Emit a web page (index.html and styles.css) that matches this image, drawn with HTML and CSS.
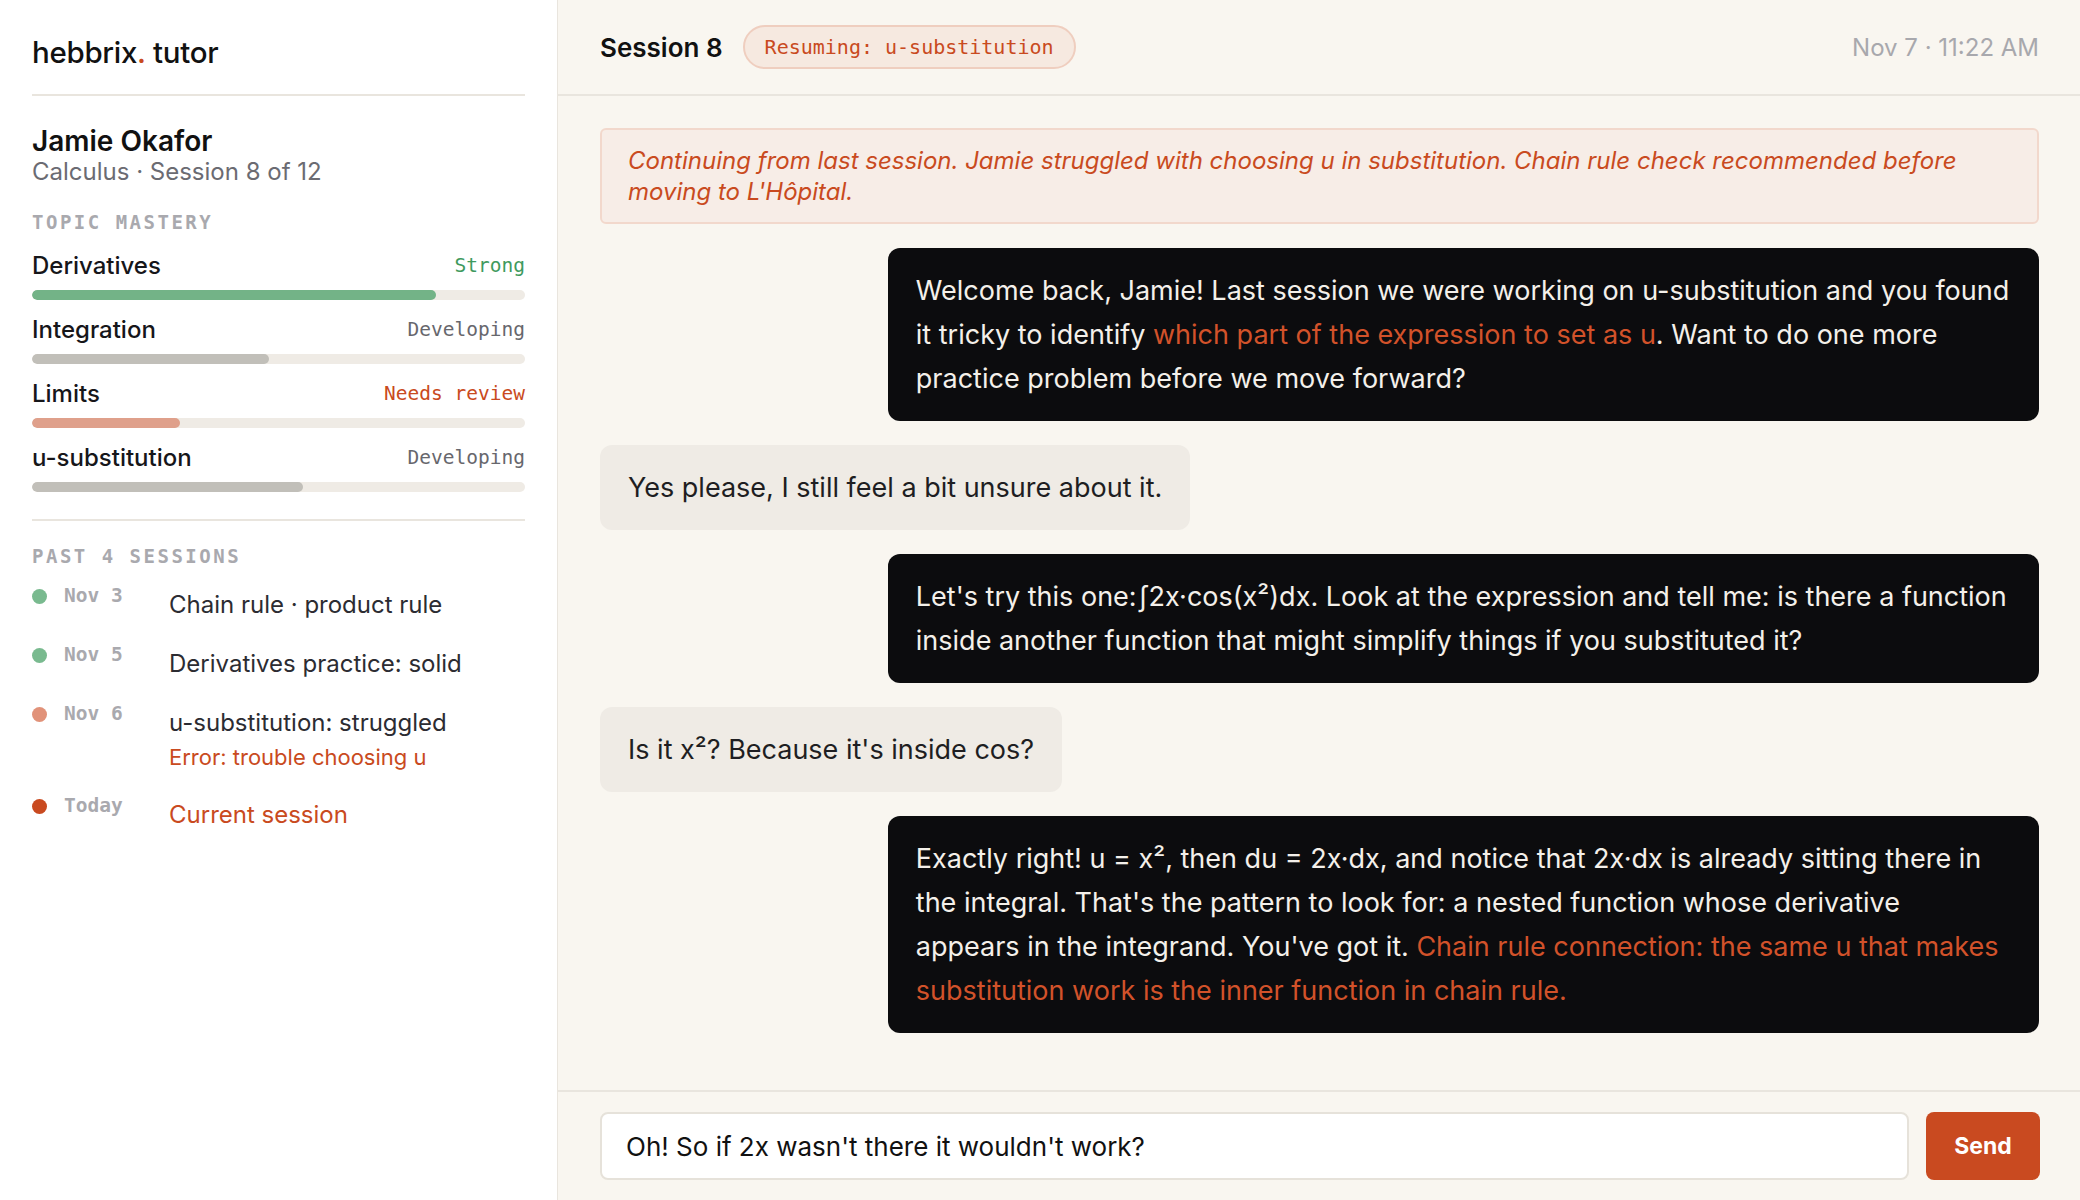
FILE: index.html
```html
<!DOCTYPE html>
<html>
<head>
  <title>hebbrix. tutor</title>
  <link rel="stylesheet" href="styles.css">
</head>
<body>
  <div id="sidebar">
    <div class="brand">hebbrix<span class="dot-accent">.</span> tutor</div>

    <div class="student">
      <div class="student-name">Jamie Okafor</div>
      <div class="student-meta">Calculus · Session 8 of 12</div>
    </div>

    <div class="label">TOPIC MASTERY</div>
    <div class="topics">
      <div class="topic">
        <div class="topic-head">
          <span class="topic-name">Derivatives</span>
          <span class="topic-status strong">Strong</span>
        </div>
        <div class="track"><div class="fill fill-strong" style="width: 82%;"></div></div>
      </div>
      <div class="topic">
        <div class="topic-head">
          <span class="topic-name">Integration</span>
          <span class="topic-status developing">Developing</span>
        </div>
        <div class="track"><div class="fill fill-developing" style="width: 48%;"></div></div>
      </div>
      <div class="topic">
        <div class="topic-head">
          <span class="topic-name">Limits</span>
          <span class="topic-status review">Needs review</span>
        </div>
        <div class="track"><div class="fill fill-review" style="width: 30%;"></div></div>
      </div>
      <div class="topic">
        <div class="topic-head">
          <span class="topic-name">u-substitution</span>
          <span class="topic-status developing">Developing</span>
        </div>
        <div class="track"><div class="fill fill-developing" style="width: 55%;"></div></div>
      </div>
    </div>

    <div class="divider"></div>

    <div class="label">PAST 4 SESSIONS</div>
    <div class="sessions">
      <div class="session">
        <span class="session-dot green"></span>
        <span class="session-date">Nov 3</span>
        <div class="session-info">
          <div class="session-desc">Chain rule · product rule</div>
        </div>
      </div>
      <div class="session">
        <span class="session-dot green"></span>
        <span class="session-date">Nov 5</span>
        <div class="session-info">
          <div class="session-desc">Derivatives practice: solid</div>
        </div>
      </div>
      <div class="session">
        <span class="session-dot salmon"></span>
        <span class="session-date">Nov 6</span>
        <div class="session-info">
          <div class="session-desc">u-substitution: struggled</div>
          <div class="session-error">Error: trouble choosing u</div>
        </div>
      </div>
      <div class="session">
        <span class="session-dot red"></span>
        <span class="session-date">Today</span>
        <div class="session-info">
          <div class="session-desc current">Current session</div>
        </div>
      </div>
    </div>
  </div>

  <div id="main">
    <div class="header">
      <span class="session-title">Session 8</span>
      <span class="pill">Resuming: u-substitution</span>
      <span class="timestamp">Nov 7 · 11:22 AM</span>
    </div>

    <div class="chat">
      <div class="note">Continuing from last session. Jamie struggled with choosing u in substitution. Chain rule check recommended before moving to L'Hôpital.</div>

      <div class="msg tutor">Welcome back, Jamie! Last session we were working on u-substitution and you found it tricky to identify <span class="hl">which part of the expression to set as u</span>. Want to do one more practice problem before we move forward?</div>

      <div class="msg student-msg">Yes please, I still feel a bit unsure about it.</div>

      <div class="msg tutor">Let's try this one:<span class="integral">∫</span>2x·cos(x²)dx. Look at the expression and tell me: is there a function inside another function that might simplify things if you substituted it?</div>

      <div class="msg student-msg">Is it x²? Because it's inside cos?</div>

      <div class="msg tutor">Exactly right! u = x², then du = 2x·dx, and notice that 2x·dx is already sitting there in the integral. That's the pattern to look for: a nested function whose derivative appears in the integrand. You've got it. <span class="hl">Chain rule connection: the same u that makes substitution work is the inner function in chain rule.</span></div>
    </div>

    <div class="composer">
      <input type="text" class="composer-input" value="Oh! So if 2x wasn't there it wouldn't work?">
      <button class="send-button">Send</button>
    </div>
  </div>
</body>
</html>
```

FILE: styles.css
```css
body {
  font-family: Inter, "Noto Sans", sans-serif;
  margin: 0;
  height: 100vh;
  display: flex;
  color: #16161a;
  background-color: #f9f6f0;
  overflow: hidden;
}

#sidebar {
  width: 558px;
  box-sizing: border-box;
  flex-shrink: 0;
  background-color: #fff;
  border-right: 1px solid #e9e5de;
  padding: 0 32px;
}

.brand {
  font-size: 29.5px;
  line-height: 34px;
  font-weight: 500;
  letter-spacing: -0.3px;
  color: #111;
  padding: 35px 0 25px;
  border-bottom: 2px solid #e9e5de;
}

.dot-accent {
  color: #c94a20;
}

.student {
  padding-top: 29px;
}

.student-name {
  font-size: 28px;
  line-height: 32px;
  font-weight: 600;
  color: #111;
}

.student-meta {
  font-size: 24px;
  line-height: 30px;
  color: #6b6b72;
}

.label {
  font-family: "DejaVu Sans Mono", monospace;
  font-size: 19px;
  line-height: 23px;
  font-weight: bold;
  letter-spacing: 2.5px;
  color: #a9a9ae;
  margin-top: 24px;
}

.topics {
  margin-top: 16px;
}

.topic {
  margin-bottom: 14px;
}

.topic-head {
  display: flex;
  justify-content: space-between;
  align-items: center;
  height: 30px;
}

.topic-name {
  font-size: 24px;
  font-weight: 500;
  color: #16161a;
}

.topic-status {
  font-family: "DejaVu Sans Mono", monospace;
  font-size: 19.5px;
}

.topic-status.strong {
  color: #3f9a5e;
}

.topic-status.developing {
  color: #67676d;
}

.topic-status.review {
  color: #c94a20;
}

.track {
  margin-top: 10px;
  height: 10px;
  border-radius: 5px;
  background-color: #efebe5;
  overflow: hidden;
}

.fill {
  height: 100%;
  border-radius: 5px;
}

.fill-strong {
  background-color: #73b387;
}

.fill-developing {
  background-color: #c1bfb9;
}

.fill-review {
  background-color: #dfa08b;
}

.divider {
  margin-top: 27px;
  height: 2px;
  background-color: #e9e5de;
}

.sessions {
  margin-top: 16px;
}

.session {
  display: flex;
  align-items: flex-start;
  margin-bottom: 23px;
}

.session-dot {
  width: 15px;
  height: 15px;
  border-radius: 50%;
  margin-top: 5px;
  margin-right: 17px;
  flex-shrink: 0;
}

.session-dot.green {
  background-color: #79ba8f;
}

.session-dot.salmon {
  background-color: #e19279;
}

.session-dot.red {
  background-color: #c94a20;
}

.session-date {
  font-family: "DejaVu Sans Mono", monospace;
  font-size: 19.5px;
  line-height: 23px;
  font-weight: bold;
  color: #a9a9ae;
  width: 105px;
  flex-shrink: 0;
}

.session-info {
  padding-top: 6px;
}

.session-desc {
  font-size: 24px;
  line-height: 30px;
  color: #2c2c32;
}

.session-desc.current {
  color: #c94a20;
}

.session-error {
  font-size: 22px;
  line-height: 28px;
  margin-top: 5px;
  color: #c94a20;
}

#main {
  flex: 1;
  display: flex;
  flex-direction: column;
  min-width: 0;
}

.header {
  height: 94px;
  display: flex;
  align-items: center;
  padding: 0 41px 0 42px;
  border-bottom: 2px solid #e9e5de;
  flex-shrink: 0;
}

.session-title {
  font-size: 26px;
  font-weight: 600;
  color: #111;
}

.pill {
  margin-left: 20px;
  height: 40px;
  line-height: 40px;
  padding: 0 20px;
  border: 2px solid #efcebf;
  border-radius: 22px;
  background-color: #f6e9e0;
  font-family: "DejaVu Sans Mono", monospace;
  font-size: 20px;
  color: #c94a20;
}

.timestamp {
  margin-left: auto;
  font-size: 24px;
  color: #a8a8ad;
}

.chat {
  flex: 1;
  display: flex;
  flex-direction: column;
  gap: 24px;
  padding: 32px 41px 0 42px;
  overflow: hidden;
}

.note {
  border: 2px solid #f2d8cc;
  border-radius: 6px;
  background-color: #f7ede7;
  padding: 15px 26px;
  font-size: 24px;
  line-height: 31px;
  font-style: italic;
  color: #c94a20;
}

.msg {
  font-size: 27px;
  line-height: 44px;
  padding: 21px 28px 20px;
  border-radius: 12px;
  max-width: 80%;
  box-sizing: border-box;
}

.msg.tutor {
  align-self: flex-end;
  background-color: #0c0c0e;
  color: #f4f0ea;
}

.msg.student-msg {
  align-self: flex-start;
  background-color: #efebe5;
  color: #1e1e22;
}

.integral {
  margin-left: 2px;
}

.hl {
  color: #d2522a;
}

.composer {
  flex-shrink: 0;
  display: flex;
  gap: 17px;
  padding: 20px 40px 20px 42px;
  border-top: 2px solid #e9e5de;
}

.composer-input {
  flex: 1;
  height: 68px;
  box-sizing: border-box;
  border: 2px solid #e6e2da;
  border-radius: 8px;
  background-color: #fff;
  padding: 0 24px;
  font-family: Inter, "Noto Sans", sans-serif;
  font-size: 26px;
  color: #111;
  outline: none;
}

.send-button {
  width: 114px;
  height: 68px;
  border: none;
  border-radius: 8px;
  background-color: #c94a20;
  color: #fff;
  font-family: Inter, "Noto Sans", sans-serif;
  font-size: 23px;
  font-weight: 700;
  cursor: pointer;
}
```
